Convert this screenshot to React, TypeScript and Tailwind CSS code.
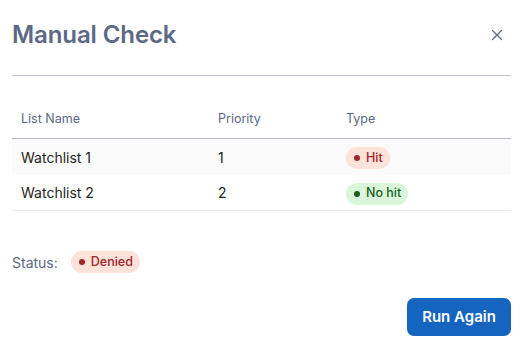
import { X } from "lucide-react";

const ROWS = [
  { name: "Watchlist 1", priority: 1, hit: true },
  { name: "Watchlist 2", priority: 2, hit: false },
];

function Badge({ tone, label }: { tone: "red" | "green"; label: string }) {
  const cls =
    tone === "red" ? "bg-[#fde2d9] text-[#a3242a]" : "bg-[#daf6da] text-[#1b5e20]";
  const dot = tone === "red" ? "bg-[#a3242a]" : "bg-[#1b5e20]";
  return (
    <span
      className={`inline-flex h-[22px] items-center gap-[6px] rounded-full pl-[8px] pr-[7px] text-[12.5px] font-medium ${cls}`}
    >
      <span className={`h-[6px] w-[6px] rounded-full ${dot}`} />
      {label}
    </span>
  );
}

export default function App() {
  return (
    <div
      className="h-[349px] w-[523px] bg-white px-3 text-[#1f1f1f]"
      style={{ fontFamily: "Inter, 'Noto Sans', sans-serif" }}
    >
      <div className="flex h-[76px] items-center justify-between border-b border-[#c4c4ce] pb-1.5">
        <h1 className="text-[24px] font-semibold tracking-[-0.1px] text-[#5b6886]">Manual Check</h1>
        <button className="mr-[5px] text-[#5b6886]">
          <X size={18} strokeWidth={1.6} />
        </button>
      </div>

      <div className="mt-[25px]">
        <div className="grid h-[38px] grid-cols-[197px_128px_1fr] items-center border-b border-[#b9b9c6] px-[9px] text-[12.5px] text-[#5b6886]">
          <div>List Name</div>
          <div>Priority</div>
          <div>Type</div>
        </div>
        {ROWS.map((r, i) => (
          <div
            key={r.name}
            className={`grid h-[36px] grid-cols-[197px_128px_1fr] items-center px-[9px] text-[14px] ${
              i === 0 ? "bg-[#fafafa]" : "border-b border-[#ececf0]"
            }`}
          >
            <div>{r.name}</div>
            <div>{r.priority}</div>
            <div>
              {r.hit ? <Badge tone="red" label="Hit" /> : <Badge tone="green" label="No hit" />}
            </div>
          </div>
        ))}
      </div>

      <div className="mt-[40px] flex items-center gap-[13px]">
        <span className="text-[14px] text-[#5b6886]">Status:</span>
        <Badge tone="red" label="Denied" />
      </div>

      <div className="mt-[25px] flex justify-end">
        <button className="h-[38px] w-[104px] rounded-[7px] bg-[#1565c0] text-[15px] font-semibold text-white">
          Run Again
        </button>
      </div>
    </div>
  );
}
